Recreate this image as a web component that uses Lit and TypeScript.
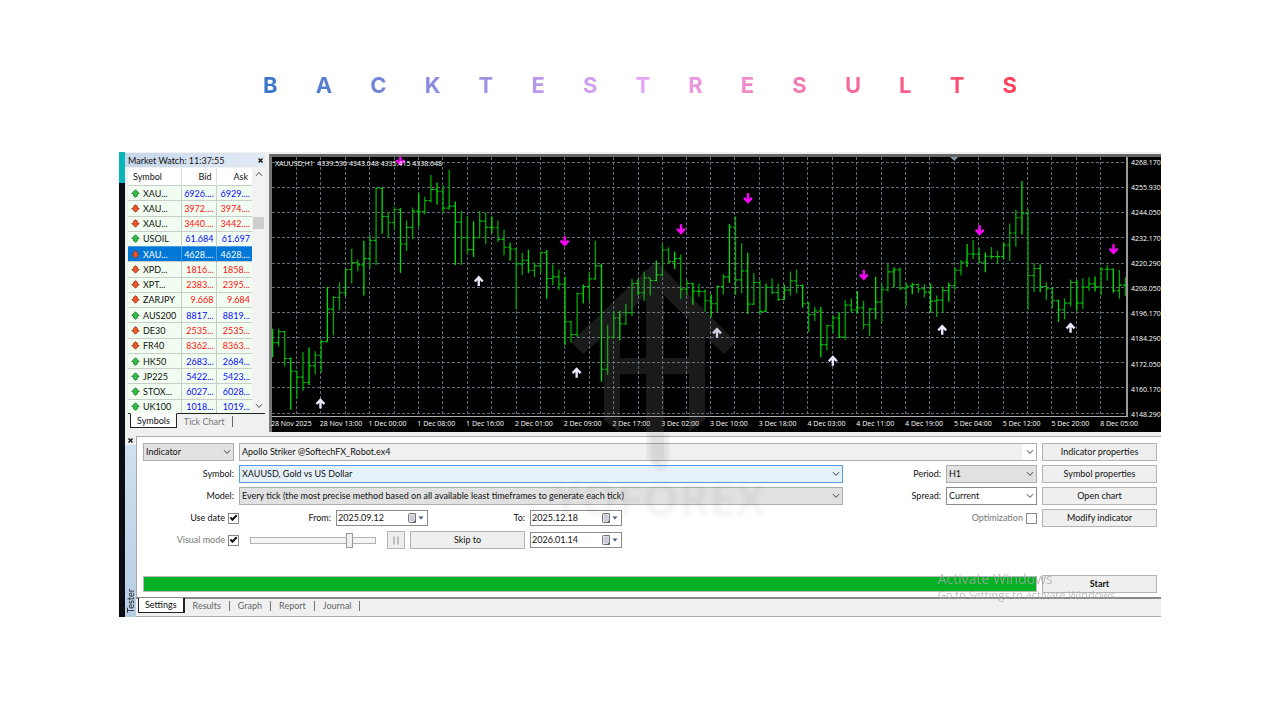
import { LitElement, html, svg, css } from "lit";
import { customElement } from "lit/decorators.js";
import { classMap } from "lit/directives/class-map.js";

const chevron = (cls = "chev") => html`<svg class=${cls} viewBox="0 0 8 6" aria-hidden="true">
  <path d="M1 1.2 4 4.4 7 1.2" fill="none" stroke="#444" stroke-width="1" />
</svg>`;

/* ---------- Market watch ---------- */

type Quote = [symbol: string, bid: string, ask: string, up: boolean];

const QUOTES: Quote[] = [
  ["XAU...", "6926....", "6929....", true],
  ["XAU...", "3972....", "3974....", false],
  ["XAU...", "3440....", "3442....", false],
  ["USOIL", "61.684", "61.697", true],
  ["XAU...", "4628....", "4628....", false],
  ["XPD...", "1816...", "1858...", false],
  ["XPT...", "2383...", "2395...", false],
  ["ZARJPY", "9.668", "9.684", false],
  ["AUS200", "8817...", "8819...", true],
  ["DE30", "2535...", "2535...", false],
  ["FR40", "8362...", "8363...", false],
  ["HK50", "2683...", "2684...", true],
  ["JP225", "5422...", "5423...", true],
  ["STOX...", "6027...", "6028...", true],
  ["UK100", "1018...", "1019...", true],
];
const SELECTED_ROW = 4;

@customElement("market-watch")
class MarketWatch extends LitElement {
  static styles = css`
    :host {
      display: flex;
      flex-direction: column;
      background: #f0f0f0;
      font: 9px/15px "Lato", "Open Sans", sans-serif;
      color: #111;
    }
    .bar {
      display: flex;
      justify-content: space-between;
      align-items: center;
      height: 14px;
      margin: 1px 0;
      padding: 0 1px 0 3px;
      background: linear-gradient(90deg, #c5d6e9, #e3ecf6);
      white-space: nowrap;
    }
    .x {
      border: 0;
      padding: 0;
      background: none;
      width: 7px;
      height: 7px;
      display: flex;
    }
    .x svg { width: 7px; height: 7px; }
    .body {
      display: flex;
      margin-left: 3px;
      background: #fff;
      height: 245px;
      overflow: hidden;
      border-bottom: 1px solid #222;
    }
    table {
      flex: 1;
      border-collapse: collapse;
      table-layout: fixed;
      height: 246px;
    }
    th {
      font-weight: 400;
      text-align: right;
      padding: 0 4px;
      height: 17px;
      background: #fff;
      border-right: 1px solid #e0e0e0;
    }
    th:first-child { text-align: left; padding-left: 5px; }
    .c-symbol { width: 43%; }
    .c-bid { width: 28%; }
    .c-ask { width: 29%; }
    td {
      padding: 0 2px 0 0;
      text-align: right;
      border-right: 1px solid #c9cdc9;
      border-top: 1px solid #c9cdc9;
      background: #f0fdf0;
      line-height: 13px;
      white-space: nowrap;
      overflow: hidden;
    }
    td:last-child, th:last-child { border-right: 0; }
    td:first-child { text-align: left; padding-left: 3px; }
    .cell { display: flex; align-items: center; gap: 3px; }
    .cell svg { width: 9px; height: 9px; flex: none; }
    .up { color: #0c0cff; }
    .down { color: #ff1010; }
    .sel td { background: #0078d7; color: #fff; border-color: #4a9be0; }
    .scroll {
      width: 13px;
      display: flex;
      flex-direction: column;
      align-items: center;
      background: #f2f2f2;
      padding: 3px 0 4px;
    }
    .scroll svg { width: 8px; height: 6px; }
    .flip { transform: rotate(180deg); }
    .thumb { width: 11px; height: 12px; background: #cdcdcd; margin: 40px 0 auto; }
    .tabs { display: flex; align-items: flex-start; padding-left: 5px; line-height: 13px; }
    .tab {
      border: 0;
      background: none;
      font: inherit;
      line-height: 13px;
      color: #777;
      padding: 1px 7px 0;
      margin: 0;
    }
    .tab.on {
      background: #fff;
      color: #111;
      padding: 0 6px;
      border: 1px solid #222;
      border-top-color: #fff;
      margin-top: -1px;
    }
    .tab.sep { border-right: 1px solid #666; line-height: 11px; margin-top: 2px; padding-top: 0; }
  `;

  render() {
    return html`
      <div class="bar">
        <span>Market Watch: 11:37:55</span>
        <button class="x" aria-label="Close">
          <svg viewBox="0 0 7 7"><path d="M1.5 1.5 5.5 5.5M5.5 1.5 1.5 5.5" stroke="#111" stroke-width="1.4" /></svg>
        </button>
      </div>
      <div class="body">
        <table>
          <colgroup><col class="c-symbol" /><col class="c-bid" /><col class="c-ask" /></colgroup>
          <thead><tr><th>Symbol</th><th>Bid</th><th>Ask</th></tr></thead>
          <tbody>
            ${QUOTES.map(([s, bid, ask, up], i) => {
              const tone = i === SELECTED_ROW ? "" : up ? "up" : "down";
              return html`<tr class=${classMap({ sel: i === SELECTED_ROW })}>
                <td><span class="cell">
                  <svg viewBox="0 0 9 9"><path
                    d=${up ? "M4.5 .8 8.2 4.600H6.4V6.8L4.5 8.2 2.6 6.8V4.600H.8Z" : "M4.5 8.2 .8 4.400H2.6V2.2L4.5 .8 6.4 2.2V4.400H8.2Z"}
                    fill=${up ? "#35c04a" : "#f0582c"} stroke=${up ? "#1d7d2c" : "#a93312"} stroke-width=".9" /></svg>${s}</span></td>
                <td class=${tone}>${bid}</td>
                <td class=${tone}>${ask}</td>
              </tr>`;
            })}
          </tbody>
        </table>
        <div class="scroll">
          ${chevron("flip")}
          <div class="thumb"></div>
          ${chevron()}
        </div>
      </div>
      <div class="tabs">
        <button class="tab on">Symbols</button>
        <button class="tab sep">Tick Chart</button>
      </div>
    `;
  }
}

/* ---------- Price chart ---------- */

/* high, low, close for each hourly bar, in thirds of a plot unit */
const BARS: number[][] = [
  [538,624,580],[538,592,547],[545,652,628],[625,782,666],[665,748,684],[608,725,700],[595,708,650],[606,675,618],
  [570,670,577],[412,578,479],[440,558,444],[398,482,430],[358,440,360],[297,402,339],[330,365,346],[273,438,327],
  [256,355,272],[113,346,115],[113,252,200],[187,265,219],[171,240,180],[175,370,283],[212,304,233],[173,268,184],
  [130,230,186],[141,194,152],[75,158,119],[98,165,124],[107,190,175],[60,180,169],[155,346,217],[184,346,264],
  [198,312,300],[215,323,264],[184,265,214],[188,284,233],[200,250,234],[212,278,269],[240,318,293],[279,333,298],
  [295,480,343],[310,377,332],[300,370,362],[338,382,349],[306,372,309],[301,448,387],[345,407,382],[360,422,404],
  [382,587,517],[514,580,556],[430,562,433],[405,462,411],[368,454,388],[273,390,349],[342,698,660],[528,677,564],
  [484,566,506],[484,573,523],[464,526,490],[388,500,402],[390,437,430],[366,455,385],[386,438,393],[333,396,376],
  [282,380,301],[293,343,336],[306,358,327],[315,448,419],[390,438,402],[400,466,425],[402,442,426],[419,487,454],
  [434,502,463],[407,488,411],[374,435,382],[223,400,232],[200,437,391],[281,431,364],[309,494,464],[370,467,399],
  [392,497,486],[402,487,414],[387,434,429],[402,455,450],[406,452,422],[366,438,394],[359,432,408],[405,475,463],
  [457,548,496],[472,515,485],[473,624,586],[526,604,529],[497,552,506],[489,566,563],[452,572,467],[447,489,482],
  [425,492,475],[454,540,526],[476,560,479],[382,510,458],[402,520,421],[342,426,367],[353,414,361],[353,422,416],
  [400,470,410],[400,434,405],[402,430,418],[404,444,428],[402,490,455],[438,503,452],[411,490,423],[399,457,408],
  [353,422,362],[331,378,338],[283,352,313],[271,328,314],[294,340,338],[308,368,320],[292,329,321],[304,343,321],
  [279,328,286],[221,334,250],[180,291,204],[93,255,191],[178,480,378],[342,428,357],[345,428,411],[398,452,418],
  [413,475,454],[450,518,481],[447,510,461],[390,471,399],[391,484,461],[386,478,413],[383,424,403],[381,426,412],
  [353,437,359],[347,393,359],[357,430,424],[361,448,407],[383,440,407],
];
const STEP = 6.1;
const ORIGIN = 0.5;
const barY = (v: number) => v / 3 - 7;

const PRICES = ["4268.170", "4255.930", "4244.050", "4232.170", "4220.290", "4208.050", "4196.170", "4184.290", "4172.050", "4160.170", "4148.290"];
const TIMES = ["28 Nov 2025", "28 Nov 13:00", "1 Dec 00:00", "1 Dec 08:00", "1 Dec 16:00", "2 Dec 01:00", "2 Dec 09:00", "2 Dec 17:00", "3 Dec 02:00", "3 Dec 10:00", "3 Dec 18:00", "4 Dec 03:00", "4 Dec 11:00", "4 Dec 19:00", "5 Dec 04:00", "5 Dec 12:00", "5 Dec 20:00", "8 Dec 05:00"];

const BUYS = [[48.5, 247], [207, 124], [305, 216], [445.5, 176], [561.500, 204], [671, 173], [799.5, 171]];
const SELLS = [[128.5, 3], [293, 84], [409.5, 72], [476.5, 41], [592.5, 118], [708.5, 73], [842.5, 92]];

@customElement("price-chart")
class PriceChart extends LitElement {
  static styles = css`
    :host {
      display: grid;
      grid-template-columns: minmax(0, 1fr) 33px;
      grid-template-rows: 261px auto;
      background: #000;
      color: #fff;
      border-top: 3px solid #666;
      border-left: 3px solid #777;
      font: 7px/12px "Open Sans", "Noto Sans", sans-serif;
      white-space: nowrap;
      position: relative;
    }
    .plot { width: 100%; height: 260px; border-right: 2px solid #999; border-bottom: 1px solid #b0b0b0; box-sizing: border-box; }
    .price {
      display: flex;
      flex-direction: column;
      justify-content: space-between;
      height: 264px;
      padding-left: 3px;
    }
    .time {
      grid-column: 1 / -1;
      display: grid;
      grid-template-columns: repeat(18, minmax(0, 1fr));
      margin: 0 12px 0 -1px;
    }
    .quote { position: absolute; left: 3px; top: 1px; }
  `;

  render() {
    return html`
      <svg class="plot" viewBox="0 0 855 260" preserveAspectRatio="none" role="img" aria-label="XAUUSD hourly price chart">
        <g stroke="#5f6c79" stroke-width="1" stroke-dasharray="3 2" shape-rendering="crispEdges">
          ${PRICES.map((_, i) => svg`<path d="M0 ${5.5 + Math.round(i * 25.15)}H856" />`)}
          ${Array.from({ length: 34 }, (_, i) => svg`<path d="M${Math.round(ORIGIN + (i + 1) * STEP * 4) - 0.5} 0V260" />`)}
        </g>
        <g fill="none">
          ${BARS.map(([h, l, c], i) => {
            const x = ORIGIN + i * STEP;
            const open = i ? BARS[i - 1][2] : c;
            return svg`<path d="M${x} ${barY(h)}V${barY(l)}" stroke=${i % 3 === 0 ? "#00e000" : "#00a800"} stroke-width="1.300" />
              <path d="M${x - 2.5} ${barY(open)}H${x}M${x} ${barY(c)}H${x + 2.5}" stroke="#00c800" stroke-width="1.100" />`;
          })}
        </g>
        <g fill="none" stroke="#e8e8ff" stroke-width="2.400">
          ${BUYS.map(([x, y]) => svg`<path d="M${x} ${y + 5.5}V${y - 4}M${x - 4} ${y + 1} ${x} ${y - 3.2} ${x + 4} ${y + 1}" />`)}
        </g>
        <g fill="none" stroke="#ff00ff" stroke-width="2.400">
          ${SELLS.map(([x, y]) => svg`<path d="M${x} ${y - 4.500}V${y + 5}M${x - 4} ${y} ${x} ${y + 4.2} ${x + 4} ${y}" />`)}
        </g>
        <path d="M679 0H687L683 4Z" fill="#8496a8" />
      </svg>
      <div class="price">${PRICES.map((p) => html`<span>${p}</span>`)}</div>
      <div class="time">${TIMES.map((t) => html`<span>${t}</span>`)}</div>
      <div class="quote">XAUUSD;H1&nbsp; 4339.530 4343.048 4335.415 4338.648</div>
    `;
  }
}

/* ---------- Strategy tester ---------- */

@customElement("strategy-tester")
class StrategyTester extends LitElement {
  static styles = css`
    :host {
      display: flex;
      background: #f0f0f0;
      font: 9px/18px "Lato", "Roboto", sans-serif;
      color: #111;
      padding-top: 3px;
    }
    .rail {
      width: 11px;
      display: flex;
      flex-direction: column;
      align-items: center;
    }
    .x { border: 0; padding: 0; background: none; width: 11px; height: 9px; display: grid; place-items: center; }
    .x svg { width: 7px; height: 7px; }
    .grip {
      flex: 1;
      width: 11px;
      background: linear-gradient(#b8cde4, #cfe0f2);
      writing-mode: vertical-rl;
      transform: rotate(180deg);
      line-height: 11px;
      padding-top: 4px;
      box-sizing: border-box;
    }
    .main { flex: 1; min-width: 0; display: flex; flex-direction: column; }
    .sheet {
      flex: 1;
      background: #fff;
      border: 1px solid #a8a8a8;
      border-right: 0;
      border-bottom: 2px solid #888;
      display: flex;
      flex-direction: column;
      justify-content: space-between;
      padding: 6px 4px 4px 6px;
    }
    .top { display: flex; gap: 5px; }
    .form { flex: 1; min-width: 0; display: flex; flex-direction: column; gap: 4px; }
    .side { width: 115px; flex: none; display: flex; flex-direction: column; gap: 4px; }
    .row { display: flex; gap: 5px; height: 18px; align-items: center; }
    .lab { width: 91px; text-align: right; flex: none; }
    .far { width: 93px; text-align: right; flex: none; }
    .off { color: #777; }
    .grow { flex: 1; min-width: 0; }
    .w91 { width: 91px; flex: none; }
    .pick { display: grid; align-items: center; }
    .pick select, .pick svg { grid-area: 1 / 1; }
    .pick svg { justify-self: end; width: 8px; height: 6px; margin-right: 3px; pointer-events: none; }
    select, .btn, .date {
      font: inherit;
      line-height: 16px;
      color: inherit;
      height: 18px;
      box-sizing: border-box;
      border-radius: 0;
      margin: 0;
    }
    select {
      appearance: none;
      width: 100%;
      border: 1px solid #adadad;
      background: #e1e1e1;
      padding: 0 14px 0 2px;
    }
    select.file { background: linear-gradient(90deg, #f0f0f0 calc(100% - 14px), #fff 0); }
    select.hot { background: #e5f1fb; border-color: #569de5; }
    select.plain { background: #fff; border-color: #8a8a8a; }
    .btn { border: 1px solid #b4b4b4; background: #efefef; padding: 0; text-align: center; }
    .skip { width: 115px; flex: none; }
    .pause { width: 18px; flex: none; display: grid; place-items: center; }
    .pause svg { width: 8px; height: 9px; }
    .start { width: 115px; flex: none; font-weight: 700; }
    .date {
      display: flex;
      align-items: center;
      width: 92px;
      height: 16px;
      border: 1px solid #8a8a8a;
      background: #fff;
      padding: 0 3px 0 0;
      flex: none;
    }
    .date input { border: 0; padding: 0 0 0 1px; margin: 0; font: inherit; color: inherit; background: none; flex: 1; min-width: 0; height: 14px; }
    .date svg { width: 16px; height: 10px; flex: none; }
    .tick { width: 96px; flex: none; display: flex; justify-content: flex-end; align-items: center; gap: 3px; }
    .opt { margin-left: auto; }
    input[type="checkbox"] {
      appearance: none;
      width: 11px;
      height: 11px;
      margin: 0;
      border: 1px solid #888;
      background: #fff;
      display: grid;
      place-items: center;
      box-sizing: border-box;
    }
    input[type="checkbox"]:checked::before {
      content: "";
      width: 5px;
      height: 2px;
      border: solid #111;
      border-width: 0 0 2px 2px;
      transform: rotate(-45deg);
      margin-bottom: 2px;
    }
    .from { width: 87px; text-align: right; flex: none; }
    .to { width: 92px; text-align: right; flex: none; }
    .range { width: 126px; flex: none; margin: 0 6px; height: 16px; appearance: none; background: none; }
    .range::-webkit-slider-runnable-track { height: 7px; border: 1px solid #b4b4b4; background: #f4f4f4; box-sizing: border-box; }
    .range::-webkit-slider-thumb {
      appearance: none;
      width: 7px;
      height: 15px;
      margin-top: -5px;
      border: 1px solid #999;
      background: #f0f0f0;
      box-sizing: border-box;
    }
    .run { display: flex; gap: 5px; align-items: center; height: 18px; }
    .prog { flex: 1; height: 16px; box-sizing: border-box; border: 1px solid #bcbcbc; background: #e6e6e6; }
    .fill { height: 100%; background: #06b025; }
    .tabs {
      display: flex;
      align-items: flex-start;
      height: 18px;
      padding-left: 2px;
      border-bottom: 1px solid #aaa;
      box-sizing: border-box;
    }
    .tab {
      border: 0;
      border-right: 1px solid #777;
      background: none;
      font: inherit;
      line-height: 10px;
      color: #666;
      padding: 0 8px;
      margin: 2px 0 0;
    }
    .tab.on {
      border: 1px solid #222;
      border-top: 0;
      border-right-width: 2px;
      background: #fff;
      color: #111;
      line-height: 14px;
      padding: 0 6px;
      margin-top: -1px;
    }
  `;

  private pick(id: string, label: string, value: string, cls: string, kind = "") {
    return html`<span class="pick ${cls}">
      <select id=${id} class=${kind} aria-label=${label}><option>${value}</option></select>
      ${chevron()}
    </span>`;
  }

  private date(id: string, label: string, value: string) {
    return html`<span class="date">
      <input id=${id} type="text" aria-label=${label} .value=${value} />
      <svg viewBox="0 0 16 10" aria-hidden="true">
        <path d="M.5 1.5Q.5.5 1.5.5H7.5V9.5H1.5Q.5 9.5.5 8.5Z" fill="#dfe3ea" stroke="#777" />
        <path d="M2 3H6.500M2 5H6.500M2 7H6.500" stroke="#aab" stroke-width=".8" />
        <path d="M5 9.500 7.500 7V9.500Z" fill="#555" />
        <path d="M10.500 3.500H15.500L13 6.500Z" fill="#3f5a86" />
      </svg>
    </span>`;
  }

  render() {
    return html`
      <div class="rail">
        <button class="x" aria-label="Close">
          <svg viewBox="0 0 7 7"><path d="M1.5 1.5 5.5 5.5M5.5 1.5 1.5 5.5" stroke="#111" stroke-width="1.4" /></svg>
        </button>
        <div class="grip">Tester</div>
      </div>
      <div class="main">
        <div class="sheet">
          <div class="top">
            <div class="form">
              <div class="row">
                ${this.pick("kind", "Type", "Indicator", "w91")}
                ${this.pick("file", "File", "Apollo Striker @SoftechFX_Robot.ex4", "grow", "file")}
              </div>
              <div class="row">
                <label class="lab" for="symbol">Symbol:</label>
                ${this.pick("symbol", "Symbol", "XAUUSD, Gold vs US Dollar", "grow", "hot")}
                <label class="far" for="period">Period:</label>
                ${this.pick("period", "Period", "H1", "w91")}
              </div>
              <div class="row">
                <label class="lab" for="model">Model:</label>
                ${this.pick("model", "Model", "Every tick (the most precise method based on all available least timeframes to generate each tick)", "grow")}
                <label class="far" for="spread">Spread:</label>
                ${this.pick("spread", "Spread", "Current", "w91", "plain")}
              </div>
              <div class="row">
                <label class="tick">Use date <input type="checkbox" checked /></label>
                <label class="from" for="from">From:</label>
                ${this.date("from", "From", "2025.09.12")}
                <label class="to" for="to">To:</label>
                ${this.date("to", "To", "2025.12.18")}
                <label class="tick opt off">Optimization <input type="checkbox" /></label>
              </div>
              <div class="row">
                <label class="tick off">Visual mode <input type="checkbox" checked /></label>
                <input class="range" type="range" min="0" max="100" value="81" aria-label="Speed" />
                <button class="btn pause" aria-label="Pause">
                  <svg viewBox="0 0 8 9"><path d="M2 .5V8.500M6 .5V8.500" stroke="#8a8a8a" /></svg>
                </button>
                <button class="btn skip">Skip to</button>
                ${this.date("skip", "Skip to date", "2026.01.14")}
              </div>
            </div>
            <div class="side">
              ${["Indicator properties", "Symbol properties", "Open chart", "Modify indicator"].map(
                (t) => html`<button class="btn">${t}</button>`
              )}
            </div>
          </div>
          <div class="run">
            <div class="prog" role="progressbar" aria-valuenow="100"><div class="fill"></div></div>
            <button class="btn start">Start</button>
          </div>
        </div>
        <div class="tabs">
          ${["Settings", "Results", "Graph", "Report", "Journal"].map(
            (t, i) => html`<button class=${classMap({ tab: true, on: i === 0 })}>${t}</button>`
          )}
        </div>
      </div>
    `;
  }
}

/* ---------- Page ---------- */

@customElement("app-root")
class AppRoot extends LitElement {
  static styles = css`
    :host { display: block; background: #fff; min-height: 100vh; }
    .page { display: flex; flex-direction: column; padding: 71px 119px 0; }
    h1 {
      display: flex;
      justify-content: space-between;
      margin: 0 144px 52px;
      font: 700 22px/29px "Inter", "Noto Sans", sans-serif;
      background: linear-gradient(90deg, #3a75c9, #e8a5f6 50%, #ff3e58);
      -webkit-background-clip: text;
      background-clip: text;
      color: transparent;
    }
    .window { position: relative; display: flex; background: #f0f0f0; }
    .edge { width: 6px; background: linear-gradient(#0bb4b8 31px, #0a0d14 0); }
    .panes { flex: 1; min-width: 0; }
    .upper { display: flex; height: 281px; background: #f0f0f0; }
    market-watch { width: 140px; flex: none; }
    price-chart { flex: 1; min-width: 0; margin: 2px 0 1px 4px; }
    strategy-tester { height: 184px; box-sizing: border-box; }
    .mark { position: absolute; inset: 0; width: 100%; height: 100%; pointer-events: none; }
    .brand { font: 700 46px "Open Sans", sans-serif; }
    .activate {
      position: absolute;
      right: 43px;
      bottom: 15px;
      color: #a9a9a9;
      font: 11px/14px "Open Sans", "Noto Sans", sans-serif;
      opacity: 0.75;
      pointer-events: none;
    }
    .activate b { display: block; font-weight: 400; font-size: 14px; line-height: 18px; }
  `;

  render() {
    return html`
      <div class="page">
        <h1 aria-label="Backtest Results">${[..."BACKTESTRESULTS"].map((c) => html`<span>${c}</span>`)}</h1>
        <div class="window">
          <div class="edge"></div>
          <div class="panes">
            <div class="upper">
              <market-watch></market-watch>
              <price-chart></price-chart>
            </div>
            <strategy-tester></strategy-tester>
          </div>
          <svg class="mark" viewBox="119 152 1042 465">
            <defs>
              <filter id="soft" x="-10%" y="-30%" width="120%" height="160%"><feGaussianBlur stdDeviation="2" /></filter>
            </defs>
            <path
              fill="#808080"
              fill-opacity=".2"
              fill-rule="evenodd"
              d="M656 261 736 342 724 354 705 336V420L689 432V374H664V432H646V374H620V432L604 420V336L583 354 571 342ZM620 320V358H646V295ZM664 295V358H689V320Z"
            />
            <path fill="#000" fill-opacity=".04" d="M646 432H664V458L656 466 646 458Z" />
            <path fill="#000" fill-opacity=".07" filter="url(#soft)" d="M649 434H669V462L661 472 651 462Z" />
            <text class="brand" x="659" y="516" text-anchor="middle" fill="#000" fill-opacity=".045" filter="url(#soft)">YOFOREX</text>
          </svg>
          <div class="activate"><b>Activate Windows</b>Go to Settings to activate Windows.</div>
        </div>
      </div>
    `;
  }
}
